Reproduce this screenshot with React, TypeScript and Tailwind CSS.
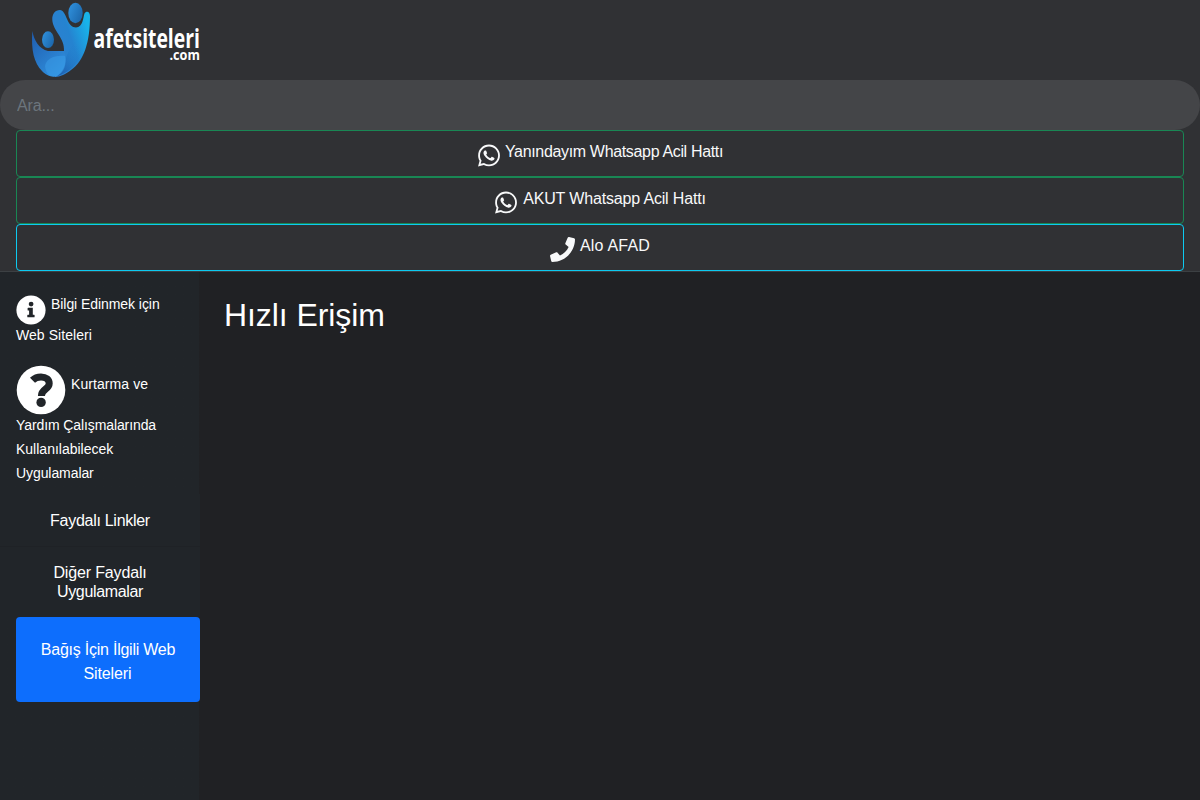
import { FaPhone, FaWhatsapp } from "react-icons/fa";

function InfoIcon() {
  return (
    <svg viewBox="0 0 30 30" className="mt-[3px] h-[30px] w-[30px] shrink-0">
      <circle cx="15" cy="15" r="14.6" fill="#fff" />
      <circle cx="15.1" cy="9.1" r="2.4" fill="#212529" />
      <path d="M12.1 12.8 H16.8 V19.7 H18.1 Q18.6 19.7 18.6 20.2 V21.8 Q18.6 22.3 18.1 22.3 H11.8 Q11.3 22.3 11.3 21.8 V20.2 Q11.3 19.7 11.8 19.7 H13.1 V15.4 H12.1 Q11.6 15.4 11.6 14.9 V13.3 Q11.6 12.8 12.1 12.8Z" fill="#212529" />
    </svg>
  );
}

function QuestionIcon() {
  return (
    <svg viewBox="0 0 50 50" className="h-[50px] w-[50px] shrink-0">
      <circle cx="25" cy="25" r="24.3" fill="#fff" />
      <path d="M16.5 15.3 C19 12.7 21.5 11.9 25 11.9 C30 11.9 33.2 14.8 33.2 18.4 C33.2 24.5 25.4 23.8 25.4 30.9" fill="none" stroke="#212529" strokeWidth="7" />
      <circle cx="25.1" cy="37.4" r="4.7" fill="#212529" />
    </svg>
  );
}

function Logo() {
  return (
    <svg width="180" height="80" viewBox="0 0 180 80" className="block">
      <defs>
        <linearGradient id="body" gradientUnits="userSpaceOnUse" x1="12" y1="45" x2="50" y2="32">
          <stop offset="0" stopColor="#2d80d0" />
          <stop offset="0.5" stopColor="#2583d0" />
          <stop offset="1" stopColor="#18b3ea" />
        </linearGradient>
        <linearGradient id="arm" x1="0" y1="0" x2="0.7" y2="1">
          <stop offset="0" stopColor="#1f5cae" />
          <stop offset="1" stopColor="#2f8fdd" />
        </linearGradient>
        <linearGradient id="head" x1="0" y1="0.2" x2="1" y2="0.8">
          <stop offset="0" stopColor="#2f90dc" />
          <stop offset="1" stopColor="#1b65a9" />
        </linearGradient>
        <linearGradient id="shade" x1="0" y1="1" x2="0.7" y2="0">
          <stop offset="0" stopColor="#174fa0" />
          <stop offset="1" stopColor="#1f86cf" stopOpacity="0" />
        </linearGradient>
      </defs>
      <path d="M12.3 20 C12 14 15 10 20 10 C23 10 25 14 27 19 C29 24 32 27.5 36 27.5 C43 27 43 18 44.5 13.5 C46 10.5 50 11 50 16 C50 42 44 61 31 70 C26 74 20 77 15 77 L17 51 L24 51 C25 38 13 31 12.3 20Z" fill="url(#body)" />
      <path d="M17 76 C26 67 25 51 35 43 C41 38 42 46 40 57 C35 67 26 74 17 76Z" fill="url(#shade)" opacity="0.8" />
      <path d="M-7.7 31 C-6 40 -1 49 8 51 L24 51 C27 58 26 70 17 76 C12 78 6 75 2 71 C-6 63 -9 50 -7.7 31Z" fill="url(#arm)" />
      <path d="M5 66 C6 59 14 55 25 56 C27 64 24 73 17 76 C10 78 6 74 5 66Z" fill="#3b9ce8" opacity="0.55" />
      <ellipse cx="35.5" cy="13" rx="7.2" ry="10.2" fill="url(#head)" />
      <ellipse cx="8" cy="39.7" rx="6" ry="8.4" fill="url(#head)" />
      <g fill="#fff" fontFamily="Open Sans, Noto Sans, sans-serif">
        <text fontSize="26.5" fontWeight="700" transform="translate(53.5 48) scale(0.76 1)" textLength="140" lengthAdjust="spacingAndGlyphs">afetsiteleri</text>
        <text fontSize="15" fontWeight="700" transform="translate(129.5 60) scale(0.8 1)" textLength="38" lengthAdjust="spacingAndGlyphs">.com</text>
      </g>
    </svg>
  );
}

export default function App() {
  return (
    <div className="flex h-[800px] w-full flex-col overflow-hidden bg-[#202124] font-['Liberation_Sans',Arial,sans-serif] text-base text-white">
      <header className="shrink-0 border-b border-[#3c4043] bg-[#303134]">
        <div className="h-20 pl-10 [&>svg]:overflow-visible">
          <Logo />
        </div>
        <input
          aria-label="Ara"
          placeholder="Ara..."
          className="block h-[50px] w-full rounded-full bg-[#444548] pt-px pr-4 pl-[17px] text-base outline-none placeholder:tracking-[-0.12px] placeholder:text-[#6c757d]"
        />
        <div className="px-4">
          <a className="flex h-[47px] justify-center gap-[5px] rounded border border-[#198754] pt-[9px] pl-px text-[#f8f9fa]">
            <FaWhatsapp className="mt-[3px] h-[25px] w-[22px]" />
            <span className="tracking-[-0.34px]">Yanındayım Whatsapp Acil Hattı</span>
          </a>
          <a className="flex h-[47px] justify-center gap-[6px] rounded border border-[#198754] pt-[9px] pl-px text-[#f8f9fa]">
            <FaWhatsapp className="mt-[3px] h-[25px] w-[22px]" />
            <span className="tracking-[-0.16px]">AKUT Whatsapp Acil Hattı</span>
          </a>
          <a className="flex h-[47px] justify-center gap-[5px] rounded border border-[#0dcaf0] pt-[9px] text-[#f8f9fa]">
            <FaPhone className="mt-[3px] h-[25px] w-[25px]" />
            <span className="tracking-[0.2px]">Alo AFAD</span>
          </a>
        </div>
      </header>
      <div className="flex min-h-0 flex-1">
        <aside className="w-[200px] shrink-0 bg-gradient-to-r from-[#212529] from-[199px] to-[#202124] to-[199px]">
          <a className="block h-[91px] px-4 pt-5 text-sm leading-6">
            <span className="flex gap-[5px]">
              <InfoIcon />
              <span className="tracking-[-0.06px]">Bilgi Edinmek için</span>
            </span>
            <span className="-mt-[2px] block tracking-[0.06px]">Web Siteleri</span>
          </a>
          <a className="block h-[131px] px-4 pt-[2px] text-sm leading-6">
            <span className="flex h-[48px] gap-[5px]">
              <QuestionIcon />
              <span className="pt-[7px] tracking-[0.08px]">Kurtarma ve</span>
            </span>
            <span className="block tracking-[-0.1px]">Yardım Çalışmalarında</span>
            <span className="block">Kullanılabilecek</span>
            <span className="block tracking-[-0.08px]">Uygulamalar</span>
          </a>
          <a className="flex h-[53px] items-center justify-center border-b border-[#1f2226] bg-[#212529] pt-[2px] tracking-[-0.28px]">Faydalı Linkler</a>
          <a className="flex h-[70px] flex-col items-center justify-center bg-[#212529] text-center leading-[19px]">
            <span className="tracking-[-0.15px]">Diğer Faydalı</span>
            <span className="tracking-[-0.35px]">Uygulamalar</span>
          </a>
          <a className="ml-4 flex h-[85px] flex-col items-center justify-center rounded bg-[#0d6efd] pt-[4px] text-center leading-6">
            <span className="tracking-[-0.24px]">Bağış İçin İlgili Web</span>
            <span className="pr-px tracking-[-0.12px]">Siteleri</span>
          </a>
        </aside>
        <main className="flex-1 px-6 pt-6">
          <h1 className="text-[32px] leading-[38px] tracking-[-0.08px]">Hızlı Erişim</h1>
        </main>
      </div>
    </div>
  );
}
